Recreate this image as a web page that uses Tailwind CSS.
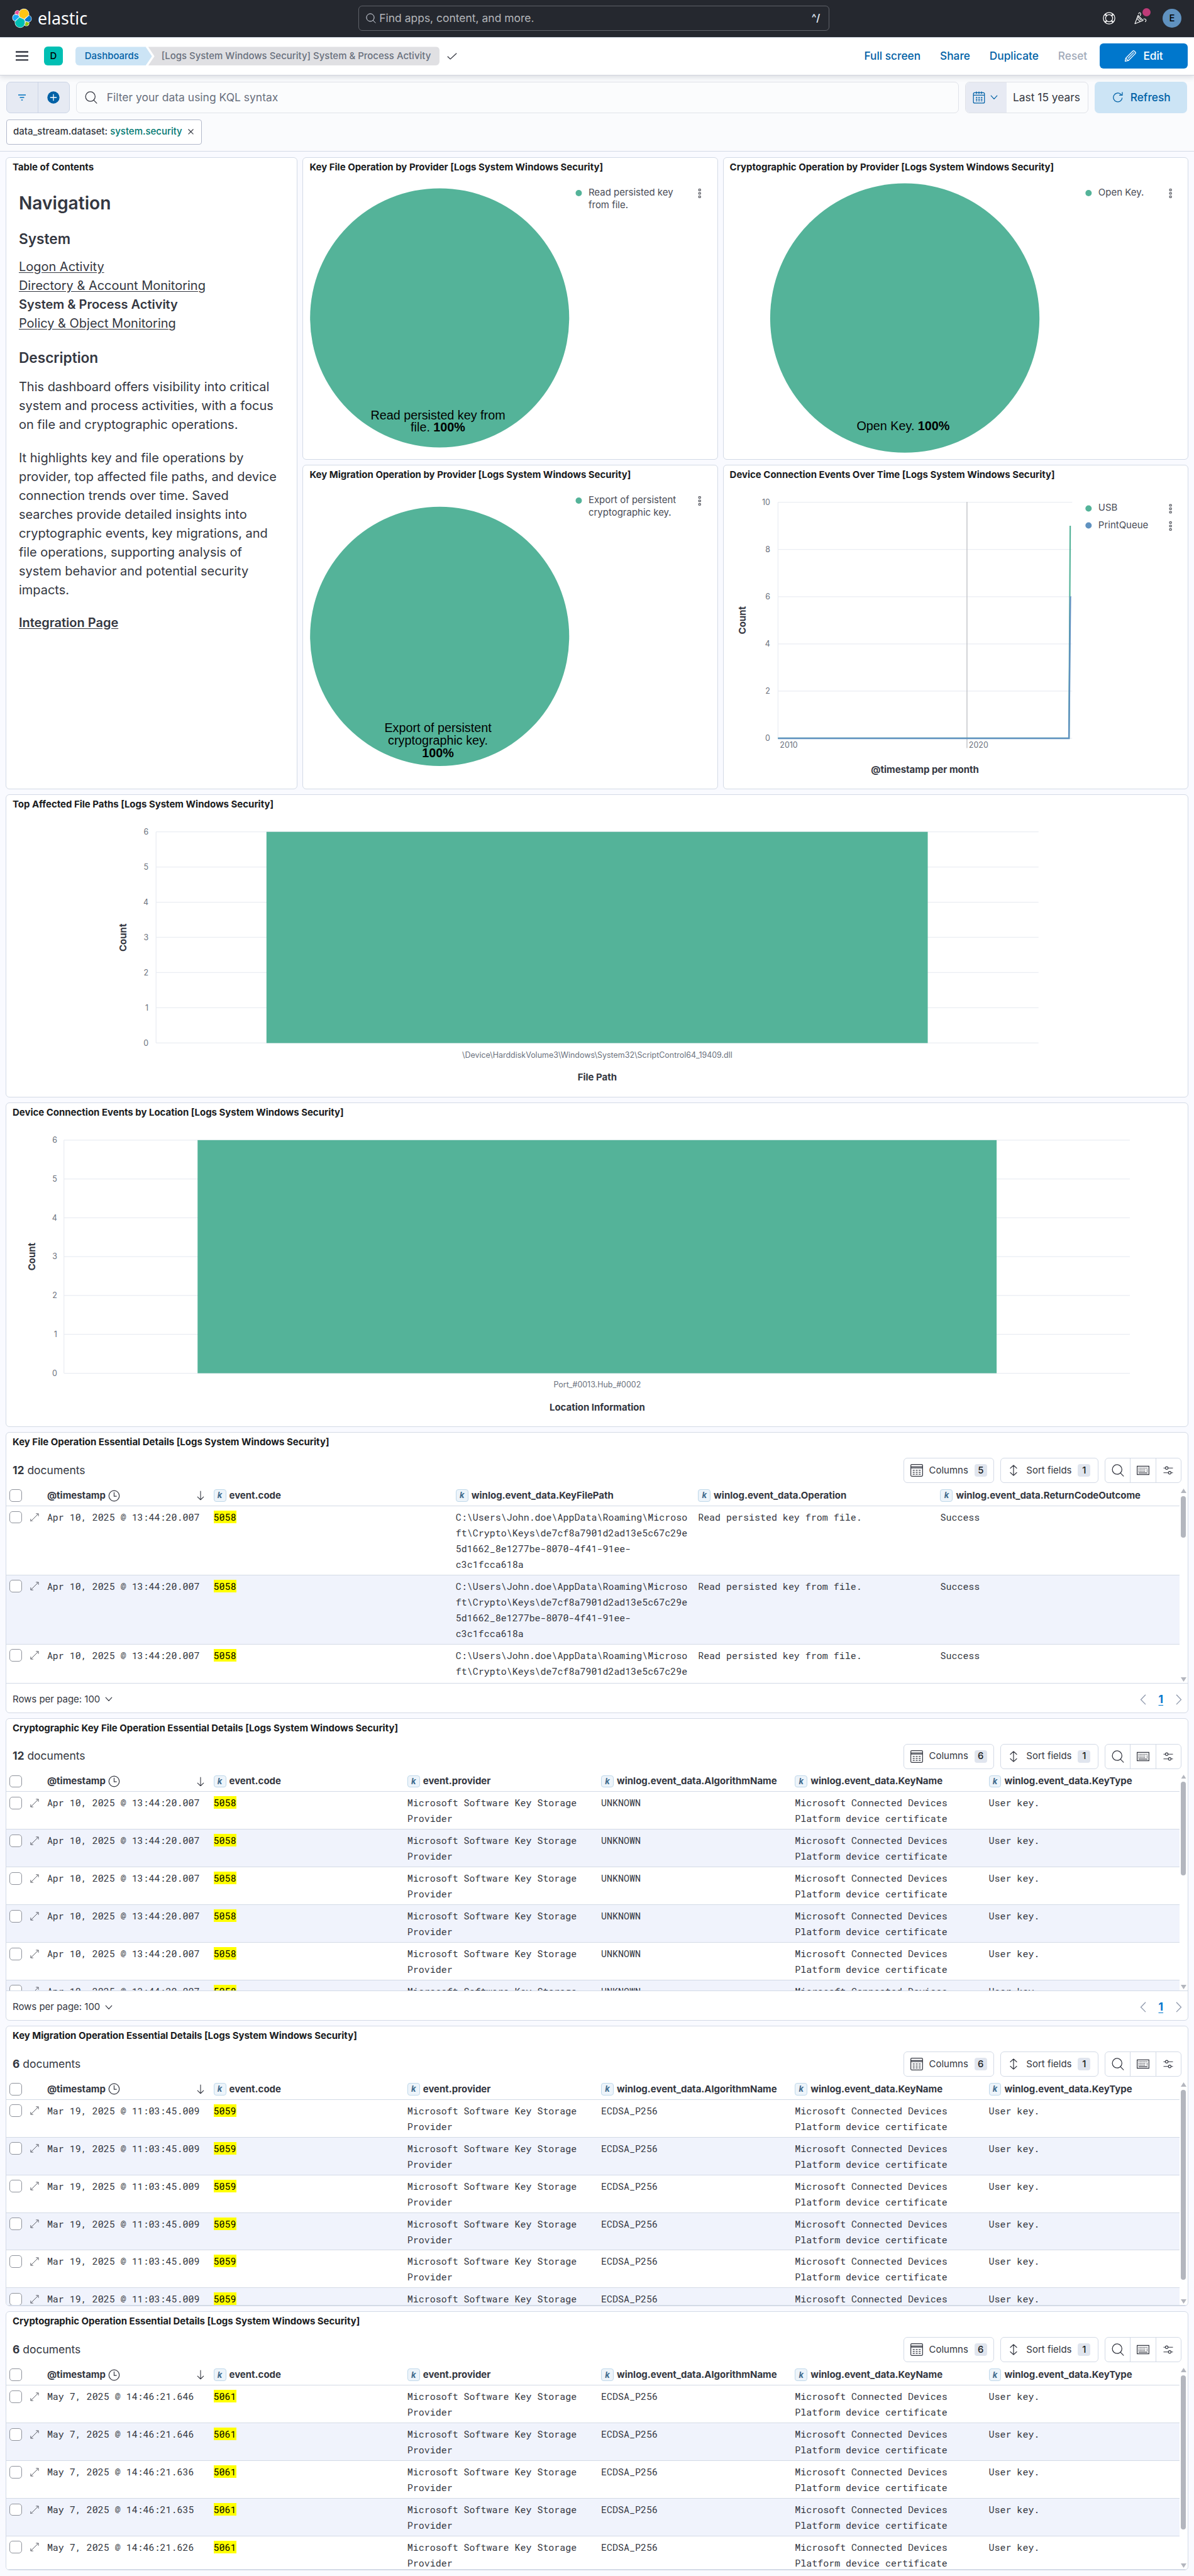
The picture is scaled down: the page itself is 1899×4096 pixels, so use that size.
<!DOCTYPE html>
<html lang="en">
<head>
<meta charset="utf-8">
<title>[Logs System Windows Security] System &amp; Process Activity - Elastic</title>
<script src="https://cdn.jsdelivr.net/npm/@tailwindcss/browser@4"></script>
</head>
<body class="bg-[#f9faff] overflow-x-hidden">

<svg class="hidden" xmlns="http://www.w3.org/2000/svg">
  <symbol id="i-search" viewBox="0 0 16 16"><g fill="none" stroke="currentColor"><circle cx="7" cy="6.9" r="6.1"/><path d="M11.2 11.3l3.9 4" stroke-linecap="round"/></g></symbol>
  <symbol id="i-columns" viewBox="0 0 16 16"><g fill="none" stroke="currentColor"><rect x=".5" y=".5" width="15" height="15" rx="1.2"/><path d="M.5 3.5h15M.5 5h15"/><path d="M3 8h10M3 10.5h10M3 13h10" stroke-dasharray="2.4 1.4"/></g></symbol>
  <symbol id="i-sort" viewBox="0 0 16 16"><g fill="none" stroke="currentColor" stroke-linecap="round" stroke-linejoin="round"><path d="M8 1.8v12.4M4 5.2l4-3.7 4 3.7M4 10.8l4 3.7 4-3.7"/></g></symbol>
  <symbol id="i-keyboard" viewBox="0 0 16 16"><g fill="none" stroke="currentColor"><path d="M.5 2.8h15v10.6H.5z"/><path d="M2.3 5.2h11.4M2.3 7.3h9.2" stroke-dasharray="1 .8"/><path d="M2.3 9.3h9M13.2 6.8v2.8" stroke-dasharray="1 .8"/><path d="M2.3 11.3h11.4" /></g></symbol>
  <symbol id="i-controls" viewBox="0 0 16 16"><g fill="none" stroke="currentColor" stroke-width=".9"><path d="M2 5h2.300M8 5h6M2 11h6M11.700 11H14"/><circle cx="6.100" cy="5" r="1.700"/><circle cx="9.900" cy="11" r="1.700"/></g></symbol>
  <symbol id="i-clock" viewBox="0 0 16 16"><g fill="none" stroke="currentColor"><circle cx="8" cy="8" r="7"/><path d="M8 3.2V8.5h3.5"/></g></symbol>
  <symbol id="i-down" viewBox="0 0 16 16"><path d="M8 1v13.6M3.2 10.2L8 14.8l4.800-4.600" fill="none" stroke="currentColor" stroke-width="1.1" stroke-linecap="round" stroke-linejoin="round"/></symbol>
  <symbol id="i-expand" viewBox="0 0 16 16"><path d="M1.500 14.500l13-13M10.500 1h4.500v4.500M1 10.500V15h4.500" fill="none" stroke="currentColor" stroke-width=".9"/></symbol>
  <symbol id="i-chev" viewBox="0 0 12 8"><path d="M1.2 1.2L6 6.4l4.800-5.200" fill="none" stroke="currentColor" stroke-width="1.25" stroke-linecap="round" stroke-linejoin="round"/></symbol>
  <symbol id="i-boxes" viewBox="0 0 6 16"><g fill="none" stroke="#343741" stroke-width="1"><path d="M1.500 1.200h3v2.600h-3zM1.500 6.700h3v2.600h-3zM1.500 12.200h3v2.600h-3z"/></g></symbol>
</svg>

<div class="w-[1901.3px] [zoom:0.9988] font-['Inter',sans-serif] text-[#343741]">

  <!-- Global header -->
  <header class="flex h-[60px] items-center border-b border-[#d3dae6] bg-[#25282f] pl-[19px] pr-5">
    <svg class="size-8 shrink-0" viewBox="0 0 32 32"><g stroke="#fff" stroke-width="1.4" stroke-linejoin="round" paint-order="stroke">
      <path fill="#FEC514" d="M12.58 13.787l7.002 3.211 7.066-6.213a7.849 7.849 0 0 0 .152-1.557c0-4.287-3.464-7.763-7.737-7.763a7.74 7.74 0 0 0-6.376 3.349l-1.176 6.123 1.07 2.85z"/>
      <path fill="#00BFB3" d="M5.333 21.215c-.107.515-.16 1.04-.159 1.566 0 4.3 3.487 7.785 7.77 7.785a7.771 7.771 0 0 0 6.406-3.369l1.166-6.102-1.556-2.986-7.03-3.215-6.597 6.32z"/>
      <path fill="#F04E98" d="M5.288 9.067l4.8 1.137L11.14 4.73a3.785 3.785 0 0 0-6.079 3.03c-.002.427.07.85.228 1.306z"/>
      <path fill="#1BA9F5" d="M4.872 10.214c-2.145.712-3.57 2.76-3.57 5.03a5.297 5.297 0 0 0 3.374 4.926l6.734-6.112-1.236-2.656-5.302-1.188z"/>
      <path fill="#93C90E" d="M20.873 27.186a3.778 3.778 0 0 0 2.286.776 3.785 3.785 0 0 0 3.556-5.096l-4.794-1.126-1.048 5.446z"/>
      <path fill="#0077CC" d="M21.848 20.563l5.278 1.24a5.31 5.31 0 0 0 3.57-5.03 5.295 5.295 0 0 0-3.383-4.924l-6.903 6.073 1.438 2.64z"/>
    </g></svg>
    <span class="ml-[9px] w-[80px] font-['Noto_Sans'] text-[26.8px] leading-[38px] text-white">elastic</span>
    <div class="ml-[431px] flex h-10 w-[750px] items-center rounded-[6px] border border-[#5f6269] px-[11px] text-[17.5px] text-[#b3b5b9]">
      <svg class="size-4 text-[#dfe5ef]"><use href="#i-search"/></svg>
      <span class="ml-[5px]">Find apps, content, and more.</span>
      <span class="ml-auto mr-[3px] text-[16px] font-semibold text-[#dfe5ef]">^/</span>
    </div>
    <div class="ml-auto flex items-center">
      <svg class="size-5" viewBox="0 0 20 20" fill="none" stroke="#fff" stroke-width="1.25"><circle cx="10" cy="10" r="9.2"/><circle cx="10" cy="10" r="5.6"/><path d="M3.4 4.4l2.8 2.2M4.4 3.3l2.2 2.9M16.6 4.4l-2.8 2.2M15.6 3.3l-2.2 2.9M3.4 15.6l2.8-2.2M4.4 16.7l2.2-2.9M16.6 15.6l-2.8-2.2M15.6 16.7l-2.2-2.9"/></svg>
      <div class="relative ml-[30px] size-5">
        <svg class="size-5" viewBox="0 0 20 20" fill="none" stroke="#fff" stroke-width="1.1" stroke-linejoin="round"><path d="M6 5.500L1 18.800l13.200-5.200zM4.500 10.500l5 4.800M6 5.500L5.800 8l5.500 5.500"/><path d="M6.800 3.600c0-2.600 2.800-3.400 3.400-1 .3 1.500-.4 2.500-.8 3.600M14.500 11.500c1.600-1 4.300-.2 4.300 1.800 0 1.200-.800 2-1.600 2.400"/></svg>
        <span class="absolute left-[13px] top-[-6px] size-[13px] rounded-full bg-[#bf3b78]"></span>
      </div>
      <span class="ml-[25px] flex size-[30px] items-center justify-center rounded-full bg-[#6092c0] text-[15px] font-medium text-black">E</span>
    </div>
  </header>

  <!-- Breadcrumb bar -->
  <div class="relative flex h-[60px] items-center border-b border-[#d0d4dc] bg-white pl-[25px] pr-[10px] shadow-[0_3px_8px_rgba(60,70,90,0.16)]">
    <svg class="h-4 w-5" viewBox="0 0 20 16"><path d="M0 1.500h20M0 8h20M0 14.500h20" stroke="#343741" stroke-width="2.300"/></svg>
    <span class="ml-[25px] flex size-[30px] items-center justify-center rounded-[6px] bg-[#00bfb3] text-[15px] font-medium text-black">D</span>
    <nav class="ml-5 flex items-center text-[15px] font-medium leading-[30px]">
      <a class="h-[30px] w-[122px] rounded-l-[6px] bg-[#cce4f5] pl-[15px] text-[#0061a6] [clip-path:polygon(0_0,112px_0,122px_50%,112px_100%,0_100%)]">Dashboards</a>
      <span class="ml-[-6px] h-[30px] w-[464px] whitespace-nowrap rounded-r-[6px] bg-[#e0e0e3] pl-[21px] text-[#69707d] [clip-path:polygon(0_0,100%_0,100%_100%,0_100%,10px_50%)]">[Logs System Windows Security] System &amp; Process Activity</span>
    </nav>
    <svg class="ml-[12px] h-[11px] w-4" viewBox="0 0 16 11"><path d="M.8 5.800l4.400 4.200L15.200.8" fill="none" stroke="#343741" stroke-width="1.300"/></svg>
    <div class="ml-auto flex items-center text-[17.3px] font-medium text-[#0061a6]">
      <a>Full screen</a><a class="ml-[31px]">Share</a><a class="ml-[31px]">Duplicate</a><a class="ml-[31px] text-[#a2abba]">Reset</a>
      <span class="ml-5 flex h-10 w-[140px] items-center justify-center gap-[10px] rounded-[6px] bg-[#0077cc] text-white">
        <svg class="size-5" viewBox="0 0 20 20" fill="none" stroke="#fff" stroke-width="1.250" stroke-linejoin="round"><path d="M1.500 18.500l1-5L14 2c1.200-1.200 5.200 2.600 4 3.900L6.500 17.500zM6 14L15.500 4.400M2.500 13.500l4 4"/></svg>Edit</span>
    </div>
  </div>

  <!-- Query bar and filters -->
  <div class="h-[121px] border-b border-[#d3dae6] bg-[#fafbfd] px-[10px] pt-[10px]">
    <div class="flex h-[50px] gap-[10px]">
      <div class="flex w-[101px] overflow-hidden rounded-[7px] border border-[#ccd5e6] bg-[#e6eaf3]">
        <span class="flex flex-1 items-center justify-center border-r border-[#ccd5e6]"><svg class="h-[10px] w-3" viewBox="0 0 12 10"><path d="M0 1h12M2.500 5h7M4.800 9h2.400" stroke="#0071bd" stroke-width="1.300"/></svg></span>
        <span class="flex flex-1 items-center justify-center"><svg class="size-5" viewBox="0 0 20 20"><circle cx="10" cy="10" r="9.700" fill="#0061a6"/><path d="M10 4.800v10.400M4.800 10h10.400" stroke="#fff" stroke-width="1.300"/></svg></span>
      </div>
      <div class="flex w-[1406px] items-center rounded-[7px] border border-[#e0e3e9] bg-[#fbfcfd] pl-[13px] text-[17.5px] text-[#69707d]">
        <svg class="size-5 text-[#343741]"><use href="#i-search"/></svg><span class="ml-[15px]">Filter your data using KQL syntax</span>
      </div>
      <div class="flex w-[196px] overflow-hidden rounded-[7px] border border-[#e0e3e9] bg-[#fbfcfd] text-[17.4px]">
        <span class="flex w-[65px] items-center bg-[#e7eaf3] pl-[11px]">
          <svg class="size-5" viewBox="0 0 20 20" fill="none" stroke="#0061a6" stroke-width="1.250"><rect x="1.200" y="2.500" width="17.600" height="16.500" rx="2"/><path d="M1 6.500h18M6 .5v4M10 .5v4M14 .5v4"/><path d="M5 10h10.500M5 12.700h10.500M5 15.400h10.500" stroke-width="1.500" stroke-dasharray="2.500 1.500"/></svg>
          <svg class="ml-[8px] h-2 w-3 text-[#0061a6]"><use href="#i-chev"/></svg>
        </span>
        <span class="flex items-center whitespace-nowrap pl-[10px]">Last 15 years</span>
      </div>
      <div class="flex w-[147px] items-center rounded-[7px] bg-[#cce4f5] pl-[27px] text-[17.3px] font-medium text-[#0061a6]">
        <svg class="size-5" viewBox="0 0 20 20" fill="none" stroke="currentColor" stroke-width="1.250"><path d="M16.800 10.500a7 7 0 1 1-2.600-6l1.600 1.400M17 1.500v5h-5"/></svg><span class="ml-[10px]">Refresh</span>
      </div>
    </div>
    <div class="mt-[10px] flex h-10 w-[311px] items-center whitespace-nowrap rounded-[4px] border border-[#b3b9cb] bg-white pl-[10px] text-[15px] font-medium">
      data_stream.dataset:&nbsp;<span class="text-[#007871]">system.security</span>
      <svg class="ml-[9px] size-[9px]" viewBox="0 0 9 9"><path d="M.5.5l8 8M8.500.5l-8 8" stroke="#343741" stroke-width="1.100"/></svg>
    </div>
  </div>

  <main class="flex flex-col gap-2 px-[9px] pb-[9px] pt-[9px]">

    <div class="grid grid-cols-[465px_661px_741px] grid-rows-[482px_517px] gap-2">

      <section class="row-span-2 rounded-[6px] border border-[#d3dae6] bg-white">
        <h2 class="pl-[10px] text-[15px] font-bold leading-[30px] text-[#1a1c21]">Table of Contents</h2>
        <div class="px-5 pt-[23px] text-[20px] leading-[30px]">
          <h1 class="text-[28.2px] font-semibold leading-10">Navigation</h1>
          <h3 class="mt-[21px] text-[22.7px] font-semibold leading-[30px]">System</h3>
          <ul class="mt-[16px]">
            <li><a class="underline underline-offset-[2px]">Logon Activity</a></li>
            <li><a class="underline underline-offset-[2px]">Directory &amp; Account Monitoring</a></li>
            <li class="font-semibold">System &amp; Process Activity</li>
            <li><a class="underline underline-offset-[2px]">Policy &amp; Object Monitoring</a></li>
          </ul>
          <h3 class="mt-[24px] text-[22.7px] font-semibold leading-[30px]">Description</h3>
          <p class="mt-[17px]">This dashboard offers visibility into critical<br>system and process activities, with a focus<br>on file and cryptographic operations.</p>
          <p class="mt-[23px] whitespace-nowrap">It highlights key and file operations by<br>provider, top affected file paths, and device<br>connection trends over time. Saved<br>searches provide detailed insights into<br>cryptographic events, key migrations, and<br>file operations, supporting analysis of<br>system behavior and potential security<br>impacts.</p>
          <p class="mt-[22px] font-semibold"><a class="underline underline-offset-[2px]">Integration Page</a></p>
        </div>
      </section>

      <section class="rounded-[6px] border border-[#d3dae6] bg-white">
        <h2 class="pl-[10px] text-[15px] font-bold leading-[30px] text-[#1a1c21]">Key File Operation by Provider [Logs System Windows Security]</h2>
        <svg class="block h-[450px] w-[659px]" viewBox="483 281 659 450">
          <circle cx="700.500" cy="505.700" r="206.300" fill="#54b399"/>
          <g class="font-['Liberation_Sans',sans-serif] text-[19.8px]" text-anchor="middle"><text x="697.800" y="667">Read persisted key from</text><text x="697.800" y="687">file. <tspan class="font-bold">100%</tspan></text></g>
          <circle cx="922" cy="307" r="5" fill="#54b399"/>
          <g class="text-[15px]" fill="#4a4d57"><text x="937.500" y="311.500">Read persisted key</text><text x="937.500" y="331.500">from file.</text></g>
          <use href="#i-boxes" x="1111.500" y="299.500" width="6" height="16"/>
        </svg>
      </section>

      <section class="rounded-[6px] border border-[#d3dae6] bg-white">
        <h2 class="pl-[10px] text-[15px] font-bold leading-[30px] text-[#1a1c21]">Cryptographic Operation by Provider [Logs System Windows Security]</h2>
        <svg class="block h-[450px] w-[739px]" viewBox="1152 281 739 450">
          <circle cx="1440.400" cy="506" r="214.400" fill="#54b399"/>
          <text class="font-['Liberation_Sans',sans-serif] text-[19.8px]" text-anchor="middle" x="1437.800" y="684.500">Open Key. <tspan class="font-bold">100%</tspan></text>
          <circle cx="1733" cy="307" r="5" fill="#54b399"/>
          <text class="text-[15px]" fill="#4a4d57" x="1748.600" y="311.500">Open Key.</text>
          <use href="#i-boxes" x="1860.500" y="299.500" width="6" height="16"/>
        </svg>
      </section>

      <section class="rounded-[6px] border border-[#d3dae6] bg-white">
        <h2 class="pl-[10px] text-[15px] font-bold leading-[30px] text-[#1a1c21]">Key Migration Operation by Provider [Logs System Windows Security]</h2>
        <svg class="block h-[485px] w-[659px]" viewBox="483 771 659 485">
          <circle cx="700.500" cy="1013.200" r="206.300" fill="#54b399"/>
          <g class="font-['Liberation_Sans',sans-serif] text-[19.8px]" text-anchor="middle"><text x="697.800" y="1165.500">Export of persistent</text><text x="697.800" y="1185.500">cryptographic key.</text><text x="697.800" y="1205.500" class="font-bold">100%</text></g>
          <circle cx="922" cy="797" r="5" fill="#54b399"/>
          <g class="text-[15px]" fill="#4a4d57"><text x="937.500" y="801.500">Export of persistent</text><text x="937.500" y="821.500">cryptographic key.</text></g>
          <use href="#i-boxes" x="1111.500" y="789.500" width="6" height="16"/>
        </svg>
      </section>

      <section class="rounded-[6px] border border-[#d3dae6] bg-white">
        <h2 class="pl-[10px] text-[15px] font-bold leading-[30px] text-[#1a1c21]">Device Connection Events Over Time [Logs System Windows Security]</h2>
        <svg class="block h-[485px] w-[739px]" viewBox="1152 771 739 485">
          <path d="M1238.500 799.700h468.400M1238.500 874.800h468.400M1238.500 950h468.400M1238.500 1025.100h468.400M1238.500 1100.300h468.400M1238.500 1175.400h468.400M1238.500 799.700v375.700" stroke="#eaedf3" stroke-width="1.250"/>
          <path d="M1539.400 799v392" stroke="#c4c6ca" stroke-width="1.500"/>
          <path d="M1238.500 1175.400H1701.800L1703.800 837" fill="none" stroke="#54b399" stroke-width="2.200"/>
          <path d="M1238.500 1175.400H1701.800L1704 949.500" fill="none" stroke="#6092c0" stroke-width="2.500"/>
          <g class="text-[12.5px]" fill="#6a717d"><g text-anchor="end"><text x="1226" y="804">10</text><text x="1226" y="879.300">8</text><text x="1226" y="954.500">6</text><text x="1226" y="1029.500">4</text><text x="1226" y="1104.800">2</text><text x="1226" y="1180">0</text></g><text x="1241.400" y="1191">2010</text><text x="1542.300" y="1191">2020</text></g>
          <g class="text-[15px] font-bold" fill="#343741" text-anchor="middle"><text transform="translate(1187.500 987.500) rotate(-90)">Count</text><text x="1472.500" y="1230.800">@timestamp per month</text></g>
          <circle cx="1733" cy="809.500" r="5" fill="#54b399"/><circle cx="1733" cy="836.500" r="5" fill="#6092c0"/>
          <g class="text-[15px]" fill="#4a4d57"><text x="1748.600" y="813.500">USB</text><text x="1748.600" y="841.500">PrintQueue</text></g>
          <use href="#i-boxes" x="1860.500" y="802" width="6" height="16"/><use href="#i-boxes" x="1860.500" y="829.500" width="6" height="16"/>
        </svg>
      </section>
    </div>

    <section class="h-[482px] rounded-[6px] border border-[#d3dae6] bg-white">
      <h2 class="pl-[10px] text-[15px] font-bold leading-[30px] text-[#1a1c21]">Top Affected File Paths [Logs System Windows Security]</h2>
      <svg class="block h-[450px] w-[1881px]" viewBox="10 1296 1881 450">
        <path d="M248.500 1324.700H1653.700M248.500 1380.700H1653.700M248.500 1436.700H1653.700M248.500 1492.700H1653.700M248.500 1548.800H1653.700M248.500 1604.800H1653.700M248.500 1660.800H1653.700M248.500 1324.700V1660.800" stroke="#eaedf3" stroke-width="1.250"/>
        <rect x="424.300" y="1324.700" width="1053" height="336.300" fill="#54b399"/>
        <g class="text-[12.5px]" fill="#6a717d"><g text-anchor="end"><text x="236.400" y="1329">6</text><text x="236.400" y="1385">5</text><text x="236.400" y="1441">4</text><text x="236.400" y="1497">3</text><text x="236.400" y="1553">2</text><text x="236.400" y="1609">1</text><text x="236.400" y="1665">0</text></g><text text-anchor="middle" x="951" y="1684">\Device\HarddiskVolume3\Windows\System32\ScriptControl64_19409.dll</text></g>
        <g class="text-[15px] font-bold" fill="#343741" text-anchor="middle"><text transform="translate(201.500 1493) rotate(-90)">Count</text><text x="951" y="1721">File Path</text></g>
      </svg>
    </section>

    <section class="h-[517px] rounded-[6px] border border-[#d3dae6] bg-white">
      <h2 class="pl-[10px] text-[15px] font-bold leading-[30px] text-[#1a1c21]">Device Connection Events by Location [Logs System Windows Security]</h2>
      <svg class="block h-[485px] w-[1881px]" viewBox="10 1786 1881 485">
        <path d="M101.800 1814.900H1799.200M101.800 1876.700H1799.200M101.800 1938.600H1799.200M101.800 2000.400H1799.200M101.800 2062.300H1799.200M101.800 2124.100H1799.200M101.800 2186H1799.200M101.800 1814.900V2186" stroke="#eaedf3" stroke-width="1.250"/>
        <rect x="314.600" y="1814.900" width="1272.400" height="371.100" fill="#54b399"/>
        <g class="text-[12.5px]" fill="#6a717d"><g text-anchor="end"><text x="91" y="1819.200">6</text><text x="91" y="1881">5</text><text x="91" y="1942.900">4</text><text x="91" y="2004.700">3</text><text x="91" y="2066.600">2</text><text x="91" y="2128.400">1</text><text x="91" y="2190.300">0</text></g><text text-anchor="middle" x="951" y="2209">Port_#0013.Hub_#0002</text></g>
        <g class="text-[15px] font-bold" fill="#343741" text-anchor="middle"><text transform="translate(56.500 2000.400) rotate(-90)">Count</text><text x="951" y="2245.800">Location Information</text></g>
      </svg>
    </section>

    <div id="tables" class="flex flex-col gap-2"></div>
  </main>
</div>

<script>
const wide = 'winlog.event_data.';
const provider = 'Microsoft Software Key Storage<br>Provider';
const device = 'Microsoft Connected Devices<br>Platform device certificate';
const keyPath = 'C:\\Users\\John.doe\\AppData\\Roaming\\Microso<br>ft\\Crypto\\Keys\\de7cf8a7901d2ad13e5c67c29e<br>5d1662_8e1277be-8070-4f41-91ee-<br>c3c1fcca618a';
const sixCols = ['event.code', 'event.provider', wide + 'AlgorithmName', wide + 'KeyName', wide + 'KeyType'];
const row = (time, code, ...cells) => ({ time, code, cells });

const tables = [
  { title: 'Key File Operation Essential Details', docs: 12, height: 447, thumb: 66, footer: true,
    cols: ['event.code', wide + 'KeyFilePath', wide + 'Operation', wide + 'ReturnCodeOutcome'],
    rows: Array.from({ length: 3 }, () => row('Apr 10, 2025 @ 13:44:20.007', 5058, keyPath, 'Read persisted key from file.', 'Success')) },
  { title: 'Cryptographic Key File Operation Essential Details', docs: 12, height: 482, thumb: 149, footer: true, cols: sixCols,
    rows: Array.from({ length: 6 }, () => row('Apr 10, 2025 @ 13:44:20.007', 5058, provider, 'UNKNOWN', device, 'User key.')) },
  { title: 'Key Migration Operation Essential Details', docs: 6, height: 447, thumb: 303, cols: sixCols,
    rows: Array.from({ length: 6 }, () => row('Mar 19, 2025 @ 11:03:45.009', 5059, provider, 'ECDSA_P256', device, 'User key.')) },
  { title: 'Cryptographic Operation Essential Details', docs: 6, height: 412, thumb: 245, cols: sixCols,
    rows: ['646', '646', '636', '635', '626'].map(ms => row('May 7, 2025 @ 14:46:21.' + ms, 5061, provider, 'ECDSA_P256', device, 'User key.')) },
];

const checkbox = '<span class="ml-[5px] block size-5 shrink-0 rounded-[5px] border border-[#8f939c] bg-white"></span>';
const badge = n => `<span class="ml-[10px] flex size-5 items-center justify-center rounded-[4px] bg-[#e0e5ee] font-medium text-[#1a1c21]">${n}</span>`;

const toolbar = n => `
  <div class="flex h-[50px] items-center pl-[10px] pr-[10px]">
    <div class="text-[17.5px]"><b class="font-bold">${n.docs}</b> documents</div>
    <div class="ml-auto flex h-10 gap-[10px] text-[15px]">
      <div class="flex w-[145px] items-center rounded-[6px] border border-[#d3dae6] pl-[10px]"><svg class="size-5"><use href="#i-columns"/></svg><span class="ml-[10px]">Columns</span>${badge(n.cols.length + 1)}</div>
      <div class="flex w-[156px] items-center rounded-[6px] border border-[#d3dae6] pl-[10px]"><svg class="size-5"><use href="#i-sort"/></svg><span class="ml-[10px]">Sort fields</span>${badge(1)}</div>
      <div class="flex w-[122px] divide-x divide-[#d3dae6] rounded-[6px] border border-[#d3dae6]">
        <span class="flex flex-1 items-center justify-center"><svg class="size-5"><use href="#i-search"/></svg></span>
        <span class="flex flex-1 items-center justify-center"><svg class="size-5"><use href="#i-keyboard"/></svg></span>
        <span class="flex flex-1 items-center justify-center"><svg class="size-5"><use href="#i-controls"/></svg></span>
      </div>
    </div>
  </div>`;

const headerRow = n => `
  <div class="flex h-[37px] items-center border-b border-[#d3dae6] pt-[4px] text-[15px] font-bold">
    <div class="w-[60px]">${checkbox}</div>
    <div class="flex w-[265px] items-center pl-[5px]">@timestamp<svg class="ml-[4px] size-[19px]"><use href="#i-clock"/></svg><svg class="ml-auto mr-[8px] size-4"><use href="#i-down"/></svg></div>
    ${n.cols.map(c => `<div class="flex min-w-0 flex-1 items-center whitespace-nowrap pl-[5px]"><span class="mr-[5px] flex size-5 shrink-0 items-center justify-center rounded-[4px] border border-[#bfd8ea] bg-[#edf4fa] text-[13px] italic text-[#3f6a8c]">k</span>${c}</div>`).join('')}
  </div>`;

const dataRow = (r, i) => `
  <div class="flex border-b border-[#d3dae6] ${i % 2 ? 'bg-[#f0f3fc]' : 'bg-white'} pb-1 pt-[5px] font-['Roboto_Mono',monospace] text-[15px] leading-[25px]">
    <div class="flex h-[25px] w-[60px] items-center">${checkbox}<svg class="ml-[13px] size-[14px]"><use href="#i-expand"/></svg></div>
    <div class="w-[265px] whitespace-nowrap pl-[5px]">${r.time}</div>
    <div class="min-w-0 flex-1 pl-[5px]"><mark class="bg-[#ffff00] text-black">${r.code}</mark></div>
    ${r.cells.map(c => `<div class="min-w-0 flex-1 whitespace-nowrap pl-[5px]">${c}</div>`).join('')}
  </div>`;

const footer = `
  <div class="flex h-[46px] shrink-0 items-center pl-[10px] pr-[9px] pt-[5px] text-[15px]">
    Rows per page: 100<svg class="ml-2 h-2 w-3"><use href="#i-chev"/></svg>
    <div class="ml-auto flex items-center text-[#8b95a9]">
      <svg class="h-[17px] w-[10px]" viewBox="0 0 10 17"><path d="M9 .8L1.500 8.500 9 16.200" fill="none" stroke="currentColor" stroke-width="1.250"/></svg>
      <span class="mx-[20px] text-[17.5px] font-bold text-[#0077cc] underline underline-offset-[3px]">1</span>
      <svg class="h-[17px] w-[10px]" viewBox="0 0 10 17"><path d="M1 .8l7.500 7.700L1 16.200" fill="none" stroke="currentColor" stroke-width="1.250"/></svg>
    </div>
  </div>`;

document.getElementById('tables').innerHTML = tables.map(t => `
  <section class="flex flex-col overflow-hidden rounded-[6px] border border-[#d3dae6] bg-white" style="height:${t.height}px">
    <h2 class="shrink-0 pl-[10px] text-[15px] font-bold leading-[30px] text-[#1a1c21]">${t.title} [Logs System Windows Security]</h2>
    <div class="mt-[5px] shrink-0">${toolbar(t)}</div>
    <div class="mt-[-5px] flex min-h-0 flex-1 overflow-hidden border-b border-[#d3dae6]">
      <div class="w-[1868px]">${headerRow(t)}${t.rows.map(dataRow).join('')}</div>
      <div class="flex w-[13px] flex-col items-center pt-[9px] pb-[2px]">
        <svg class="h-[7px] w-[9px]" viewBox="0 0 9 7"><path d="M4.500 0L9 7H0z" fill="#b3b6be"/></svg>
        <div class="mt-[5px] w-[8px] rounded-full bg-[#b3b6be]" style="height:${t.thumb}px"></div>
        <svg class="mt-auto h-[7px] w-[9px]" viewBox="0 0 9 7"><path d="M0 0h9L4.500 7z" fill="#b3b6be"/></svg>
      </div>
    </div>
    ${t.footer ? footer : ''}
  </section>`).join('');
</script>
</body>
</html>
